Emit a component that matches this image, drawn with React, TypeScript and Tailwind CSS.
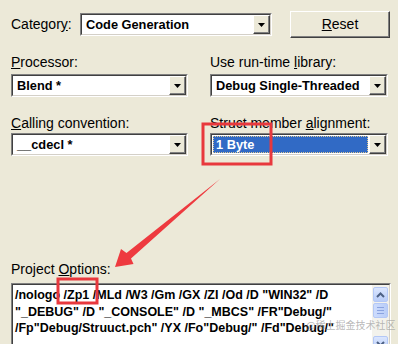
import type { ReactNode } from "react";

const FONT = "font-['Liberation_Sans',Arial,sans-serif]";

function DropButton() {
  return (
    <div className="flex h-full w-[17px] shrink-0 items-center justify-center border border-t-white border-l-white border-b-[#404040] border-r-[#404040] bg-[#ece9d8] shadow-[inset_-1px_-1px_0_#808080]">
      <svg width="7" height="4" viewBox="0 0 7 4">
        <path d="M0 0h7L3.5 4z" fill="#000" />
      </svg>
    </div>
  );
}

function Combo({ value, highlight = false, className = "" }: { value: string; highlight?: boolean; className?: string }) {
  return (
    <div
      className={`flex h-[23px] border border-t-[#808080] border-l-[#808080] border-b-white border-r-white text-[12.8px] font-bold ${className}`}
    >
      <div className="flex flex-1 border border-t-[#404040] border-l-[#404040] border-b-[#d4d0c8] border-r-[#d4d0c8] bg-white">
        <div className="flex flex-1 items-center p-[1px]">
          {highlight ? (
            <div className="flex h-full flex-1 items-center border border-dotted border-[#e0c890] bg-[#316ac5] pl-[2px] text-white">
              {value}
            </div>
          ) : (
            <div className="flex h-full flex-1 items-center pl-[3px]">{value}</div>
          )}
        </div>
        <DropButton />
      </div>
    </div>
  );
}

function Label({ children }: { children: ReactNode }) {
  return <div className="h-[16px] leading-[16px] whitespace-nowrap">{children}</div>;
}

function ScrollBtn({ dir }: { dir: "up" | "down" }) {
  return (
    <div className="flex h-[15px] w-[15px] items-center justify-center rounded-[2px] border border-[#b4c8f6] bg-gradient-to-b from-[#dbe6fe] to-[#b9cdf8]">
      <svg width="9" height="6" viewBox="0 0 9 6">
        <path
          d={dir === "up" ? "M1 5l3.5-3.5L8 5" : "M1 1l3.5 3.5L8 1"}
          stroke="#4d6185"
          strokeWidth="2"
          fill="none"
        />
      </svg>
    </div>
  );
}

export default function App() {
  return (
    <div
      className={`relative h-[344px] w-[398px] overflow-hidden bg-[#ece9d8] pl-[11px] pt-[11px] text-[14px] text-black ${FONT}`}
    >
      {/* category row */}
      <div className="flex h-[27px] items-center">
        <div className="w-[69px] whitespace-nowrap">
          Categor<span className="underline">y</span>:
        </div>
        <Combo value="Code Generation" className="w-[192px]" />
        <button
          type="button"
          className="ml-[18px] h-[27px] w-[100px] border border-t-white border-l-white border-b-[#404040] border-r-[#404040] bg-[#ece9d8] shadow-[inset_-1px_-1px_0_#808080]"
        >
          <span className="underline">R</span>eset
        </button>
      </div>

      <div className="mt-[16px] grid grid-cols-[177px_178px] gap-x-[22px]">
        <div>
          <Label>
            <span className="underline">P</span>rocessor:
          </Label>
          <Combo value="Blend *" className="mt-[4px]" />
        </div>
        <div>
          <Label>
            Use run-time <span className="underline">l</span>ibrary:
          </Label>
          <Combo value="Debug Single-Threaded" className="mt-[4px]" />
        </div>
        <div className="mt-[18px]">
          <Label>
            <span className="underline">C</span>alling convention:
          </Label>
          <Combo value="__cdecl *" className="mt-[2px]" />
        </div>
        <div className="mt-[18px]">
          <Label>
            Struct member <span className="underline">a</span>lignment:
          </Label>
          <Combo value="1 Byte" highlight className="mt-[2px]" />
        </div>
      </div>

      <div className="mt-[105px]">
        <Label>
          Project <span className="underline">O</span>ptions:
        </Label>
      </div>

      <div className="mt-[6px] flex h-[70px] w-[380px] border border-t-[#808080] border-l-[#808080] border-b-white border-r-white text-[12.5px] font-bold">
        <div className="flex flex-1 border border-t-[#404040] border-l-[#404040] border-b-[#d4d0c8] border-r-[#d4d0c8] bg-white">
          <div className="flex-1 pl-[2px] pt-[2px] leading-[16.5px] whitespace-nowrap">
            <div>/nologo /Zp1 /MLd /W3 /Gm /GX /ZI /Od /D "WIN32" /D</div>
            <div>"_DEBUG" /D "_CONSOLE" /D "_MBCS" /FR"Debug/"</div>
            <div>/Fp"Debug/Struuct.pch" /YX /Fo"Debug/" /Fd"Debug/"</div>
          </div>
          <div className="flex w-[17px] flex-col items-center bg-[#f3f2ec] pt-[2px]">
            <ScrollBtn dir="up" />
            <div className="mt-[1px] flex h-[15px] w-[15px] flex-col items-center justify-center gap-[2px] rounded-[2px] border border-[#b4c8f6] bg-gradient-to-r from-[#cddcfd] to-[#b9cdf8]">
              <div className="h-px w-[7px] bg-[#8aa3e0]" />
              <div className="h-px w-[7px] bg-[#8aa3e0]" />
              <div className="h-px w-[7px] bg-[#8aa3e0]" />
            </div>
            <div className="flex-1" />
            <ScrollBtn dir="down" />
          </div>
        </div>
      </div>

      {/* watermark */}
      <div className="absolute left-[306px] top-[317px] whitespace-nowrap text-[10px] text-[#9a9a9a]/70 font-['Noto_Sans_CJK_SC',sans-serif]">
        @稀土掘金技术社区
      </div>

      {/* annotations */}
      <svg className="pointer-events-none absolute inset-0" width="398" height="344" viewBox="0 0 398 344">
        <rect x="203" y="124" width="68" height="40" fill="none" stroke="#e8383d" strokeWidth="3" />
        <rect x="58" y="279" width="39" height="24" fill="none" stroke="#e8383d" strokeWidth="3" />
        <polygon
          points="115,267 121,249 126.5,253 220,179 131,258.5 133.5,264"
          fill="#ee3a3f"
        />
      </svg>
    </div>
  );
}
